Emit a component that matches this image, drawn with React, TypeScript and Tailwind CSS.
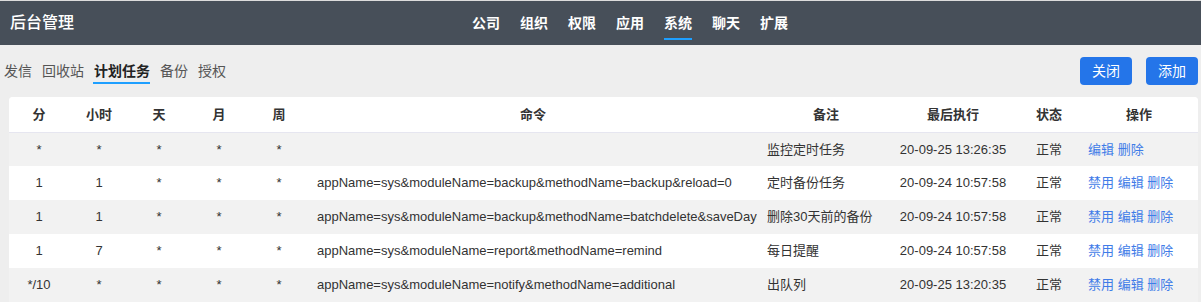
import React from "react";

const FONT = { fontFamily: '"Liberation Sans", "Noto Sans CJK SC", sans-serif' };

const navItems = ["公司", "组织", "权限", "应用", "系统", "聊天", "扩展"];
const tabs = ["发信", "回收站", "计划任务", "备份", "授权"];

type Row = {
  m: string;
  h: string;
  d: string;
  mo: string;
  w: string;
  cmd: string;
  note: string;
  last: string;
  status: string;
  disable: boolean;
};

const rows: Row[] = [
  { m: "*", h: "*", d: "*", mo: "*", w: "*", cmd: "", note: "监控定时任务", last: "20-09-25 13:26:35", status: "正常", disable: false },
  { m: "1", h: "1", d: "*", mo: "*", w: "*", cmd: "appName=sys&moduleName=backup&methodName=backup&reload=0", note: "定时备份任务", last: "20-09-24 10:57:58", status: "正常", disable: true },
  { m: "1", h: "1", d: "*", mo: "*", w: "*", cmd: "appName=sys&moduleName=backup&methodName=batchdelete&saveDays=30", note: "删除30天前的备份", last: "20-09-24 10:57:58", status: "正常", disable: true },
  { m: "1", h: "7", d: "*", mo: "*", w: "*", cmd: "appName=sys&moduleName=report&methodName=remind", note: "每日提醒", last: "20-09-24 10:57:58", status: "正常", disable: true },
  { m: "*/10", h: "*", d: "*", mo: "*", w: "*", cmd: "appName=sys&moduleName=notify&methodName=additional", note: "出队列", last: "20-09-25 13:20:35", status: "正常", disable: true },
];

export default function App() {
  return (
    <div className="w-[1201px] h-[302px] overflow-hidden bg-[#eeeeee]" style={FONT}>
      {/* top bar */}
      <div className="border-t border-[#dcdcdc] bg-[#474f59] h-[45px] flex items-center">
        <div className="w-[472px] pl-[10px] text-white text-[16px] font-medium leading-none">后台管理</div>
        <div className="flex gap-[20px] h-full">
          {navItems.map((n) => (
            <div key={n} className="relative flex items-center h-full">
              <span className="text-white text-[14px] font-bold leading-none">{n}</span>
              {n === "系统" && (
                <div className="absolute left-0 right-0 top-[37px] h-[2px] bg-[#1e9fff]" />
              )}
            </div>
          ))}
        </div>
      </div>

      {/* tabs row */}
      <div className="h-[52px] flex items-center justify-between pl-[4px] pr-[3px]">
        <div className="flex gap-[10px] h-full">
          {tabs.map((t) => (
            <div key={t} className="relative flex items-center h-full">
              <span
                className={
                  t === "计划任务"
                    ? "text-[14px] font-bold text-[#222] leading-none"
                    : "text-[14px] text-[#555] leading-none"
                }
              >
                {t}
              </span>
              {t === "计划任务" && (
                <div className="absolute -left-[1px] right-0 top-[37px] h-[2px] bg-[#1e9fff]" />
              )}
            </div>
          ))}
        </div>
        <div className="flex gap-[14px]">
          <button className="w-[52px] h-[28px] rounded-[4px] bg-[#2475e9] text-white text-[14px] leading-none">关闭</button>
          <button className="w-[52px] h-[28px] rounded-[4px] bg-[#2475e9] text-white text-[14px] leading-none">添加</button>
        </div>
      </div>

      {/* table */}
      <div className="ml-[9px] w-[1189px] rounded-t-[4px] overflow-hidden bg-white">
        <table className="table-fixed w-[1189px] border-collapse text-[#333] text-[13px]">
          <colgroup>
            <col className="w-[60px]" />
            <col className="w-[60px]" />
            <col className="w-[60px]" />
            <col className="w-[60px]" />
            <col className="w-[60px]" />
            <col className="w-[448px]" />
            <col className="w-[138px]" />
            <col className="w-[116px]" />
            <col className="w-[76px]" />
            <col className="w-[111px]" />
          </colgroup>
          <thead>
            <tr className="h-[35px] border-b border-[#e6e6f0] bg-white font-bold text-[#333]">
              <th className="p-0 text-center">分</th>
              <th className="p-0 text-center">小时</th>
              <th className="p-0 text-center">天</th>
              <th className="p-0 text-center">月</th>
              <th className="p-0 text-center">周</th>
              <th className="p-0 text-center">命令</th>
              <th className="p-0 text-center">备注</th>
              <th className="p-0 text-center">最后执行</th>
              <th className="p-0 text-center">状态</th>
              <th className="p-0 pr-[7px] text-center">操作</th>
            </tr>
          </thead>
          <tbody>
            {rows.map((r, i) => (
              <tr key={i} className={(i % 2 === 0 ? "bg-[#f2f2f2]" : "bg-white") + " h-[34px]"}>
                <td className="p-0 text-center">{r.m}</td>
                <td className="p-0 text-center">{r.h}</td>
                <td className="p-0 text-center">{r.d}</td>
                <td className="p-0 text-center">{r.mo}</td>
                <td className="p-0 text-center">{r.w}</td>
                <td className="p-0 pl-[8px] whitespace-nowrap overflow-hidden">{r.cmd}</td>
                <td className="p-0 pl-[10px] whitespace-nowrap overflow-hidden">{r.note}</td>
                <td className="p-0 text-center whitespace-nowrap">{r.last}</td>
                <td className="p-0 text-center">{r.status}</td>
                <td className="p-0 pl-[1px] text-[#3f7ce8] whitespace-nowrap">
                  {r.disable && <span>禁用 </span>}
                  <span>编辑 </span>
                  <span>删除</span>
                </td>
              </tr>
            ))}
          </tbody>
        </table>
      </div>
    </div>
  );
}
